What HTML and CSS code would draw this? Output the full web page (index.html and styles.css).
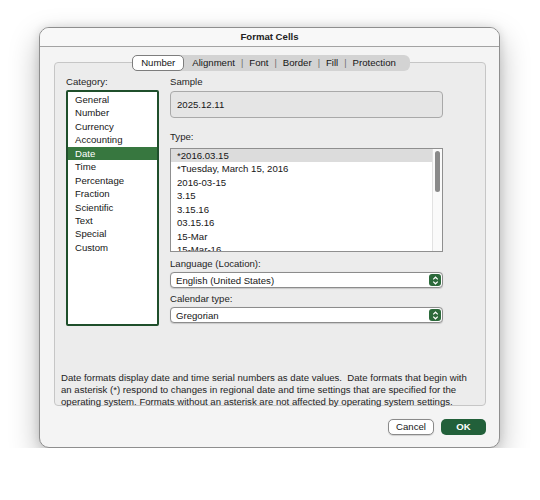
FILE: index.html
```html
<!DOCTYPE html>
<html>
<head>
<meta charset="utf-8">
<link rel="stylesheet" href="styles.css">
</head>
<body>
<div class="window">
  <div class="titlebar">Format Cells</div>
  <div class="content">
    <div class="tabs-wrap">
      <div class="tabs">
        <span class="tab active">Number</span>
        <span class="tab">Alignment</span><span class="sep">|</span>
        <span class="tab">Font</span><span class="sep">|</span>
        <span class="tab">Border</span><span class="sep">|</span>
        <span class="tab">Fill</span><span class="sep">|</span>
        <span class="tab">Protection</span>
      </div>
    </div>
    <div class="group">
      <div class="main">
        <div class="left">
          <div class="label">Category:</div>
          <div class="catlist">
            <div class="item">General</div>
            <div class="item">Number</div>
            <div class="item">Currency</div>
            <div class="item">Accounting</div>
            <div class="item selected">Date</div>
            <div class="item">Time</div>
            <div class="item">Percentage</div>
            <div class="item">Fraction</div>
            <div class="item">Scientific</div>
            <div class="item">Text</div>
            <div class="item">Special</div>
            <div class="item">Custom</div>
          </div>
        </div>
        <div class="right">
          <div class="label">Sample</div>
          <div class="sample">2025.12.11</div>
          <div class="label type-label">Type:</div>
          <div class="typelist">
            <div class="rows">
              <div class="item grey">*2016.03.15</div>
              <div class="item">*Tuesday, March 15, 2016</div>
              <div class="item">2016-03-15</div>
              <div class="item">3.15</div>
              <div class="item">3.15.16</div>
              <div class="item">03.15.16</div>
              <div class="item">15-Mar</div>
              <div class="item">15-Mar-16</div>
            </div>
            <div class="scroll"><div class="thumb"></div></div>
          </div>
          <div class="label lang-label">Language (Location):</div>
          <div class="select">
            <span>English (United States)</span>
            <span class="stepper"><svg width="7" height="9" viewBox="0 0 7 9"><path d="M1.2 3.4 L3.5 1.2 L5.8 3.4 M1.2 5.6 L3.5 7.8 L5.8 5.6" fill="none" stroke="#fff" stroke-width="1.2"/></svg></span>
          </div>
          <div class="label cal-label">Calendar type:</div>
          <div class="select">
            <span>Gregorian</span>
            <span class="stepper"><svg width="7" height="9" viewBox="0 0 7 9"><path d="M1.2 3.4 L3.5 1.2 L5.8 3.4 M1.2 5.6 L3.5 7.8 L5.8 5.6" fill="none" stroke="#fff" stroke-width="1.2"/></svg></span>
          </div>
        </div>
      </div>
      <div class="desc">Date formats display date and time serial numbers as date values.&nbsp; Date formats that begin with an asterisk (*) respond to changes in regional date and time settings that are specified for the operating system. Formats without an asterisk are not affected by operating system settings.</div>
    </div>
    <div class="buttons">
      <span class="btn cancel">Cancel</span>
      <span class="btn ok">OK</span>
    </div>
  </div>
</div>
</body>
</html>
```

FILE: styles.css
```css
* { box-sizing: border-box; }
html, body { margin: 0; padding: 0; background: #fff; }
body {
  font-family: "Liberation Sans", Arial, sans-serif;
  font-size: 9.6px;
  color: #161616;
  padding: 27px 0 0 39px;
}
.window {
  width: 461px;
  height: 421px;
  background: #f4f4f4;
  border: 1px solid #8e8e8e;
  border-radius: 10px;
  box-shadow: 0 12px 30px rgba(0,0,0,0.28), 0 0 10px rgba(0,0,0,0.12);
  display: flex;
  flex-direction: column;
  overflow: hidden;
}
.titlebar {
  height: 19px;
  border-bottom: 1px solid #a3a3a3;
  background: #f8f8f8;
  text-align: center;
  font-weight: 700;
  font-size: 9.6px;
  line-height: 18px;
  color: #222;
}
.content {
  padding: 8px 13px 0 14px;
  display: flex;
  flex-direction: column;
}
.tabs-wrap {
  display: flex;
  justify-content: center;
  margin-bottom: -9px;
  position: relative;
  z-index: 1;
  padding-left: 2px;
}
.tabs {
  display: flex;
  align-items: center;
  height: 16px;
  background: #d3d3d3;
  border-radius: 6px;
  padding-right: 8px;
}
.tab {
  line-height: 16px;
  padding: 0 6px;
  color: #161616;
}
.tab.active {
  background: #fff;
  border: 1px solid #7d7d7d;
  border-radius: 5px;
  line-height: 14px;
  padding: 0 8px;
  margin-right: 2px;
}
.sep { color: #6e6e6e; font-size: 9px; }
.group {
  border: 1px solid #c6c6c6;
  border-radius: 4px;
  background: #ececec;
  height: 344px;
  padding: 12px 0 0 11px;
  display: flex;
  flex-direction: column;
}
.main { display: flex; gap: 11px; }
.label { line-height: 13px; color: #1e1e1e; }
.left { width: 93px; }
.catlist {
  margin-top: 2px;
  height: 236px;
  background: #fff;
  border: 2px solid #1f4f2b;
  border-radius: 2px;
  padding-top: 1px;
}
.catlist .item {
  height: 13.45px;
  line-height: 13.45px;
  padding-left: 7px;
}
.catlist .item.selected {
  background: #37773f;
  color: #fff;
}
.right { width: 273px; display: flex; flex-direction: column; }
.sample {
  margin-top: 3px;
  height: 27px;
  border: 1px solid #a9a9a9;
  border-radius: 4px;
  background: #e5e5e5;
  line-height: 25px;
  padding-left: 6px;
}
.type-label { margin-top: 12px; }
.typelist {
  margin-top: 5px;
  height: 104px;
  border: 1px solid #8f8f8f;
  background: #fff;
  display: flex;
  overflow: hidden;
}
.rows { flex: 1; }
.rows .item {
  height: 13.45px;
  line-height: 13.45px;
  padding-left: 6px;
  white-space: nowrap;
}
.rows .item.grey { background: #dcdcdc; }
.scroll {
  width: 10px;
  border-left: 1px solid #e2e2e2;
  background: #fafafa;
  padding: 2px 0 0 2px;
}
.thumb {
  width: 5px;
  height: 41px;
  background: #8a8a8a;
  border-radius: 3px;
}
.lang-label { margin-top: 5px; }
.cal-label { margin-top: 4px; }
.select {
  margin-top: 2px;
  height: 16px;
  background: #fff;
  border: 1px solid #8c8c8c;
  border-radius: 4px;
  display: flex;
  align-items: center;
  justify-content: space-between;
  padding: 0 1px 0 5px;
  box-shadow: 0 0.5px 1px rgba(0,0,0,0.15);
}
.stepper {
  width: 12px;
  height: 12px;
  background: #2c6a3b;
  border-radius: 3px;
  display: flex;
  align-items: center;
  justify-content: center;
}
.desc {
  margin-top: auto;
  line-height: 12px;
  margin-left: -5px;
  margin-bottom: -3px;
  padding-right: 12px;
  color: #1e1e1e;
}
.buttons {
  display: flex;
  justify-content: flex-end;
  gap: 7px;
  margin-top: 13px;
}
.btn {
  height: 16px;
  line-height: 14px;
  border-radius: 5px;
  text-align: center;
}
.cancel {
  width: 46px;
  background: #fff;
  border: 1px solid #8a8a8a;
  box-shadow: 0 0.5px 1px rgba(0,0,0,0.15);
}
.ok {
  width: 45px;
  background: #22603a;
  color: #fff;
  font-weight: 700;
  line-height: 16px;
}
```
